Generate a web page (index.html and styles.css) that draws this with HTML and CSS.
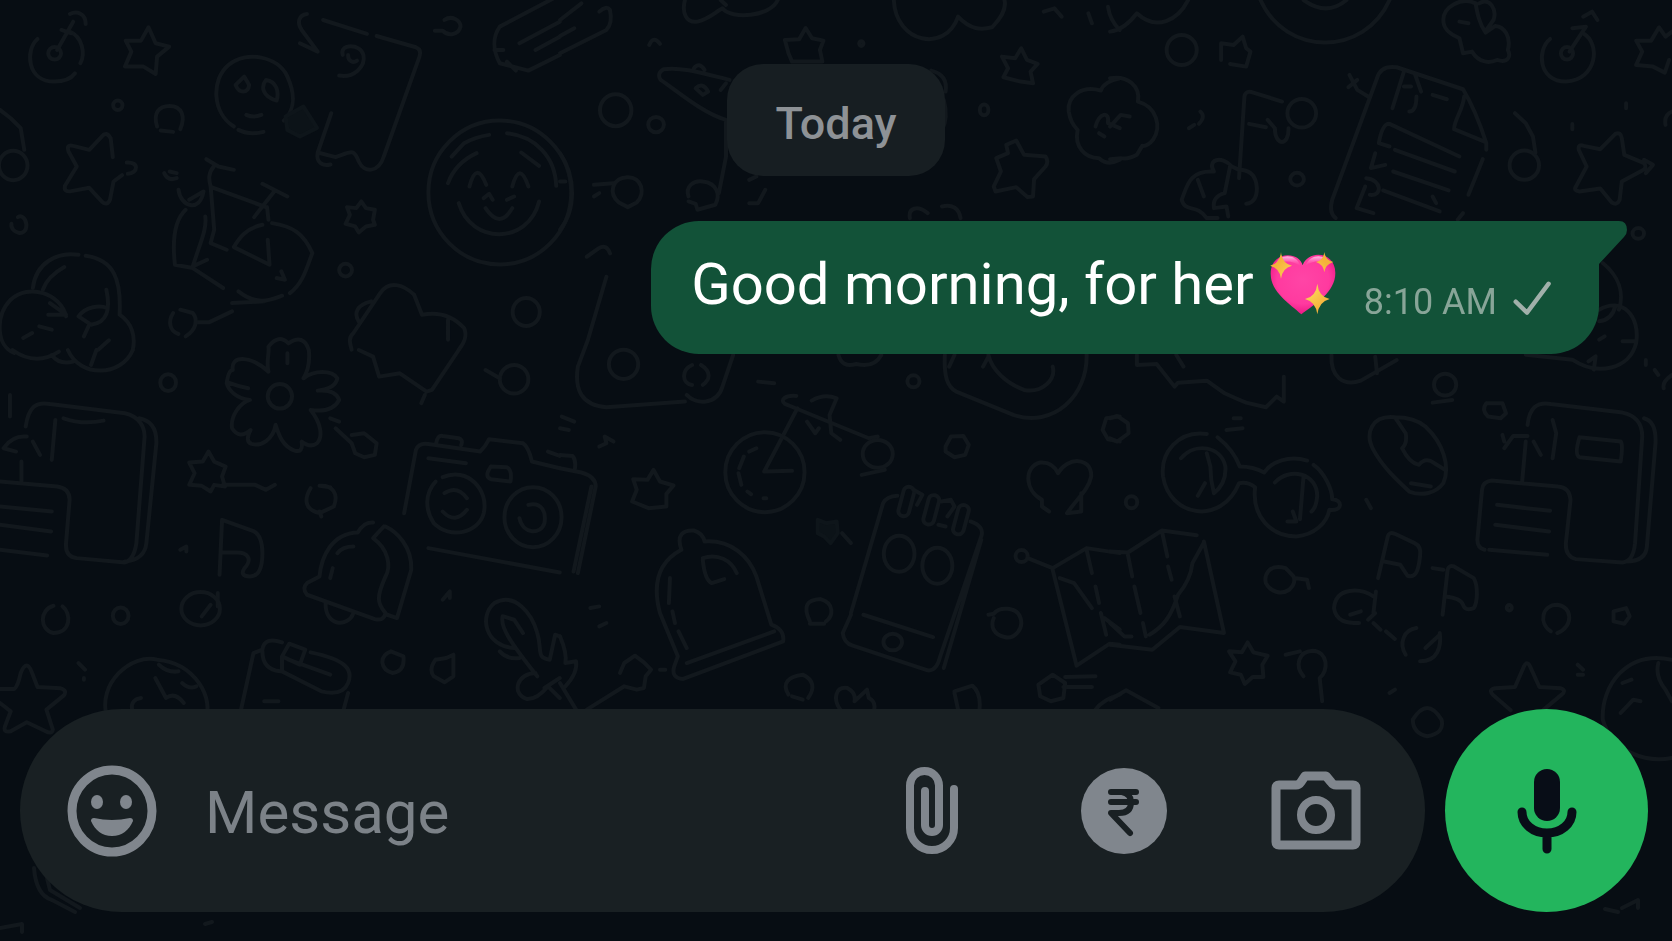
FILE: index.html
```html
<!DOCTYPE html>
<html lang="en">
<head>
    <meta charset="UTF-8">
    <meta name="viewport" content="width=device-width, initial-scale=1.0">
    <title>Chat</title>
    <link rel="stylesheet" href="styles.css">
</head>
<body>
    <!-- Doodle wallpaper -->
    <svg class="wallpaper" viewBox="0 0 1672 941" preserveAspectRatio="xMidYMid slice" aria-hidden="true">
        <!-- top left -->
        <g transform="scale(.357 .333)">
            <path d="M105 117C70 150 75 245 152 245C180 245 200 235 210 220M195 95C230 110 240 160 225 190"/>
            <ellipse cx="153" cy="160" rx="18" ry="19"/>
            <path d="M160 150L205 65M172 90L200 100M196 42C215 32 240 40 240 72"/>
            <path d="M416 82L436 130L474 140L440 170L436 222L402 200L350 200L368 155L352 122L395 122Z"/>
            <ellipse cx="330" cy="316" rx="13" ry="14"/>
            <path d="M440 380C428 340 445 318 475 318C510 318 520 350 505 388M450 392L485 396"/>
            <path d="M655 380C595 340 590 240 640 195C690 150 780 170 805 230C830 290 825 330 795 362M668 390C690 402 715 402 738 396"/>
            <path d="M660 255L684 230L698 255C695 280 670 282 660 255ZM745 240C730 260 735 290 775 302C782 275 775 245 745 240ZM690 345Q710 355 732 345"/>
            <path class="blot" d="M800 350L850 320L888 384L840 410L805 390Z"/>
            <path d="M860 42C835 45 832 70 845 90L890 155L840 130M905 60L1028 102M1055 108L1165 142Q1182 150 1175 170L1075 470C1060 520 1020 520 1005 485C990 445 985 455 940 472L890 458L928 340M890 458C885 485 900 500 926 494"/>
            <path d="M960 165C950 130 1010 130 1018 165C1025 200 990 235 950 227M975 165C975 185 990 190 1000 182"/>
            <path d="M1245 60C1265 45 1290 60 1290 80C1285 105 1255 110 1240 92L1218 92"/>
            <path d="M1568 -15L1400 80C1380 110 1380 150 1400 190L1480 212L1568 165M1455 130L1568 65M1500 150L1568 110M1385 150H1410M1420 185L1445 212"/>
            <path d="M0 330L30 355L58 385L68 450M0 325"/>
            <ellipse cx="37" cy="497" rx="40" ry="44"/>
            <path d="M316 472L310 415Q298 392 285 410L250 450L205 438Q185 432 192 455L215 500L182 558Q178 578 200 574L250 564L285 605Q300 620 308 600L318 545L342 526M355 488C390 485 388 520 358 522"/>
            <path d="M460 520Q470 545 495 535M475 515L495 520M32 672C28 700 75 715 74 675C72 655 60 645 50 652"/>
            <path d="M578 478L612 500L655 510M600 498C582 520 585 540 590 560L600 690L590 730L635 750M592 562L745 622M735 552L805 590M768 575L712 652M748 622L752 660"/>
            <path d="M575 650C580 690 560 730 540 800L580 780M520 630C490 660 482 720 490 795L540 805L625 865M500 570C505 620 560 640 570 575L530 600"/>
            <path d="M762 670C820 680 850 700 875 760C860 800 850 850 812 880M735 675C690 685 670 715 655 742L755 795L750 720M668 875C720 920 760 900 790 888M650 910L740 905M552 968H585L650 935"/>
            <path d="M788 815L798 840L775 835M1012 605L1025 625L1050 630L1045 660L1050 675L1025 680L1005 698L995 680L968 672L980 645L972 622L998 625Z"/>
            <ellipse cx="968" cy="811" rx="18" ry="19"/>
            <ellipse cx="1400" cy="578" rx="200" ry="216"/>
            <path d="M1265 470L1300 430Q1330 412 1370 405M1420 400C1500 410 1555 470 1558 558M1255 550Q1275 490 1335 460M1460 458L1510 498M1315 560Q1335 480 1362 555M1435 560Q1455 480 1480 560M1285 610C1320 735 1480 735 1510 605M1360 625Q1400 690 1435 625M1355 595L1370 582L1380 600M1420 600L1440 590"/>
            <path d="M92 865C100 790 160 755 220 765M240 768C320 780 340 840 335 945C370 970 380 1010 372 1050M120 870C130 840 150 820 180 802M298 870C310 930 300 970 255 975L220 950C240 920 280 915 300 925"/>
            <path d="M185 950C170 880 80 850 30 900C-15 950 -10 1040 40 1060M110 980L145 990M135 945H185L140 910M65 1015L90 1000M250 975L235 1010M275 1050L305 1022"/>
            <path d="M485 940C470 965 475 995 500 1003M505 930L540 940C555 960 550 990 520 1010"/>
            <path d="M985 1050C980 1030 975 1015 990 1000L1065 880C1090 840 1130 855 1160 885L1182 945C1230 935 1270 950 1300 985C1310 1010 1300 1030 1285 1050M1040 905C1000 915 990 940 1005 965M1255 960V1020"/>
            <ellipse cx="1474" cy="937" rx="38" ry="42"/>
        </g>
        <!-- top middle -->
        <g transform="translate(560) scale(.357 .333)">
            <path d="M0 60L60 10M0 108L40 85M0 160L130 90Q148 70 140 30Q130 15 110 35"/>
            <path d="M350 0C340 40 355 70 385 65C420 55 430 40 455 25C480 60 590 50 610 0M465 15L450 0"/>
            <path d="M935 0C940 130 1080 160 1115 50C1150 90 1180 90 1210 82C1240 50 1250 20 1245 0"/>
            <path d="M688 84L706 115L738 122L728 150L735 185H650L640 160L630 120L670 118Z"/>
            <path d="M250 135Q262 105 280 132M1355 35L1385 25L1405 50M1490 70L1480 40"/>
            <ellipse cx="156" cy="331" rx="44" ry="48"/>
            <ellipse cx="269" cy="374" rx="22" ry="23"/>
            <ellipse cx="844" cy="131" rx="6" ry="7"/>
            <path d="M475 240C400 220 340 200 290 208Q270 220 282 240C330 275 400 340 465 360V470L445 580M375 205Q390 185 405 210M380 265Q400 245 415 275L400 285ZM465 250L450 270"/>
            <path d="M1040 212C1070 220 1085 240 1080 275M1075 300C1085 340 1080 370 1070 390"/>
            <path d="M0 460C45 530 45 630 0 690M0 545H15M95 555L150 550M95 590L110 580"/>
            <path d="M165 608C135 580 145 535 188 532C230 530 240 580 215 608L190 622Z"/>
            <path d="M360 590C350 560 375 540 400 545C440 550 450 585 435 615L385 630L380 612L360 605"/>
            <path d="M530 540L550 530M530 610L555 610L575 570M980 655C975 625 1000 615 1030 640M1070 620Q1115 610 1122 655"/>
            <path d="M1292 145L1308 180L1338 192L1318 215L1325 250L1290 245L1242 232L1255 205L1238 170L1275 175Z"/>
            <ellipse cx="1188" cy="330" rx="12" ry="16"/>
            <path d="M1278 422L1300 465L1360 470Q1370 485 1360 500L1328 538L1325 590L1310 592L1278 562L1220 575L1215 560L1235 515L1222 475L1255 460L1250 435Z"/>
            <path d="M1568 235C1540 240 1520 255 1515 272C1460 255 1420 290 1425 335Q1430 370 1450 390C1440 440 1470 475 1510 475C1530 495 1550 490 1568 480M1500 380C1510 340 1540 330 1535 370L1568 385M1510 400L1525 410M1535 20Q1540 60 1568 90"/>
        </g>
        <!-- top right -->
        <g transform="translate(1110) scale(.3584 .333)">
            <path d="M0 95Q40 90 75 40C130 95 190 60 218 0"/>
            <path d="M420 0C490 170 710 170 780 0M540 0Q605 50 660 0"/>
            <ellipse cx="200" cy="150" rx="42" ry="45"/>
            <path d="M310 180V130L345 135L370 110L380 145L392 155L380 200L335 192M368 115"/>
            <path d="M1020 10C980 -10 930 20 930 60C930 100 970 110 975 115L985 160L1010 155C1030 190 1060 190 1080 180C1110 190 1120 170 1110 150C1120 110 1100 80 1075 78L1048 98C1030 70 1025 40 1020 10ZM1030 10C1060 -10 1080 30 1070 60L1050 90M975 65L1000 70"/>
            <path d="M1228 117C1190 150 1195 245 1272 245C1360 240 1370 130 1320 100"/>
            <ellipse cx="1275" cy="160" rx="17" ry="19"/>
            <path d="M1282 155L1328 80L1290 85M1320 50L1345 35L1360 60"/>
            <path d="M1568 95L1550 110L1532 82L1510 122L1468 122L1485 155L1468 195L1515 200L1548 218L1560 180"/>
            <path d="M0 235C50 225 85 260 78 305C130 320 145 380 120 420Q105 440 90 438L75 465Q50 480 30 475L0 478M0 380L30 345L55 350"/>
            <path d="M360 535L375 290Q378 270 400 278L480 305M388 372L435 382M440 360L460 385C460 440 500 440 498 385"/>
            <ellipse cx="535" cy="340" rx="40" ry="43"/>
            <path d="M252 335Q268 350 248 372M220 385L235 375"/>
            <path d="M200 600C215 560 220 510 290 515C270 480 310 465 340 500L360 510Q400 510 408 550C415 590 400 610 380 612M200 600C210 640 240 610 270 655H300M245 540L262 590M335 500L320 580Q285 590 290 625L325 620L330 650"/>
            <ellipse cx="522" cy="538" rx="19" ry="19"/>
            <path d="M630 655Q610 640 620 600L745 235Q755 195 800 202L985 268Q1020 330 1050 430V450M1040 478L1000 585M988 290C985 330 960 360 960 388L1045 425M820 215L788 325M820 260H840M850 220L868 275M855 290C855 325 845 335 835 335M900 285L940 298M668 225L690 270L720 290M665 262L690 240"/>
            <path d="M780 440L750 430Q760 370 780 372L975 470M795 450L962 515M740 460L728 505L768 495M790 515L945 572M762 572L920 635M715 535C760 540 760 590 725 585M712 560L688 625L735 640M900 590L910 610M985 640L970 660"/>
            <ellipse cx="1156" cy="496" rx="41" ry="44"/>
            <path d="M1130 340L1160 370L1180 410L1187 458M1440 310V325M1290 372V388M1568 335Q1545 345 1550 375"/>
            <path d="M1410 402Q1425 395 1428 415L1435 465L1490 490Q1500 505 1485 512L1428 545L1422 600Q1415 618 1400 608L1368 566L1310 575Q1292 572 1300 560L1330 500L1308 450Q1305 432 1322 438L1368 448ZM1490 480L1515 495L1495 520"/>
            <path d="M1375 790C1420 830 1435 880 1420 930M1365 930C1430 890 1480 950 1468 1030C1450 1110 1360 1130 1290 1080L1160 1065M1365 1020L1380 1010M1430 1025H1468M1350 1110L1355 1070L1335 1085M1365 965Q1400 960 1410 920"/>
            <ellipse cx="1474" cy="701" rx="16" ry="16"/>
        </g>
        <!-- middle left -->
        <g transform="translate(0 350) scale(.357 .333)">
            <path d="M35 0Q100 50 165 5M145 15Q165 45 205 35M190 0C225 85 340 80 372 0M270 0L255 45"/>
            <ellipse cx="471" cy="98" rx="22" ry="25"/>
            <path d="M752 65C745 35 755 10 752 -10Q780 -50 808 -20Q850 -50 865 0Q870 50 850 85C880 60 930 60 945 85Q940 115 890 122Q940 118 950 150Q930 190 870 180C900 220 905 260 888 280Q870 295 845 275Q850 310 825 302C790 290 780 250 772 225C765 270 730 290 705 282Q685 275 702 240Q670 270 650 235C645 200 670 160 700 150C660 145 640 120 635 100Q640 60 652 60C645 15 700 15 752 65ZM640 98Q670 110 695 115M805 40V10"/>
            <ellipse cx="784" cy="139" rx="34" ry="37"/>
            <path d="M1005 0L1045 20L1062 80L1120 70L1195 125L1210 120L1285 0M1180 160L1190 135"/>
            <ellipse cx="1440" cy="88" rx="40" ry="43"/>
            <path d="M1360 60L1400 85M28 135V200"/>
            <path d="M72 230C80 170 100 155 140 162L350 190C390 200 405 230 405 260L382 580Q375 630 350 638L215 625Q182 620 185 580L195 450Q195 415 160 410L0 395M390 205Q440 215 438 280L410 580Q405 630 350 635M0 470L145 485M0 525L143 545M0 600L132 617M60 335V395M155 210L145 330M178 205Q230 225 290 212M75 260C30 255 15 290 10 295L45 305M92 275L112 315"/>
            <path d="M584 305L600 335L632 350L622 380L630 410L600 405L590 425L565 408L530 405L545 370L530 338L568 335ZM625 405H715L745 420L770 405"/>
            <path d="M985 255L1020 250L1055 280L1050 315L1020 322L995 310L985 280L940 235M925 205L950 215"/>
            <path d="M870 415C850 450 855 480 895 490L935 470C950 430 930 405 895 408L925 412M895 485L900 500"/>
            <path d="M1132 490L1165 300Q1172 278 1200 282L1345 305Q1360 290 1370 268L1465 280Q1480 290 1490 335L1568 355M1222 280Q1225 255 1240 258L1285 265Q1298 270 1292 285M1200 325L1305 340M1375 350L1420 352Q1435 360 1430 395L1375 388Q1355 380 1375 350M1200 595L1568 668M1535 305L1568 318"/>
            <path d="M1240 382C1310 350 1370 420 1355 490C1340 550 1260 570 1215 520C1190 480 1190 430 1220 395M1245 430Q1280 405 1308 445M1240 485Q1275 525 1308 480"/>
            <ellipse cx="1493" cy="502" rx="80" ry="90"/>
            <path d="M1480 465C1520 455 1530 490 1525 520C1515 555 1465 555 1455 505"/>
            <path d="M615 675L622 510L712 545Q735 560 735 610C735 650 725 680 700 680C680 680 675 670 685 655C710 625 690 608 665 608H620M610 730V770"/>
            <ellipse cx="562" cy="777" rx="54" ry="50"/>
            <path d="M565 800L590 765M505 600L522 590V605"/>
            <path d="M1080 530C1110 545 1155 590 1152 660L1112 805L1085 795M1075 530L1045 565C1090 600 1095 650 1080 680C1055 740 1055 760 1080 790Q1075 815 1050 808L860 735Q845 715 860 700L895 680C900 620 930 550 1002 548Q1020 515 1045 518M912 760C910 830 975 835 990 790M945 610Q960 590 990 590M925 685L932 655"/>
            <path d="M150 768C110 780 110 840 150 850C200 850 200 790 175 770"/>
            <ellipse cx="338" cy="798" rx="22" ry="25"/>
            <path d="M0 1018H40Q50 1010 58 970Q75 925 90 970L105 1012L170 1016Q190 1022 178 1038L130 1080L148 1140Q145 1155 128 1145L75 1118L30 1145Q8 1150 14 1130L30 1085L0 1060"/>
            <path d="M300 1105C270 1000 370 910 440 930C550 940 600 1050 575 1110M435 985L465 1045Q490 1025 515 1060M370 1080Q365 1050 395 1045M445 945Q470 970 500 965M510 1000Q530 1020 550 1010"/>
            <path d="M670 1105L710 910L735 900Q740 860 790 878M735 905Q735 960 785 965M790 920L810 882L855 900L840 945L790 920V965L900 1025Q960 1040 975 1000C990 960 970 930 870 908M808 930L925 975M975 1030L960 1090M740 1055H780"/>
            <path d="M1095 905C1060 920 1065 960 1100 970Q1135 965 1130 920ZM1220 930L1250 925L1270 915V980L1245 998L1215 980Q1200 960 1220 930M220 940L238 960M235 985V990"/>
            <path d="M1440 895C1360 890 1340 800 1385 760C1440 725 1490 790 1505 850C1520 900 1500 925 1540 930L1555 855L1568 860M1408 800C1400 830 1430 880 1505 980M1410 800L1440 810L1465 850M1400 905Q1420 930 1455 925M1500 970C1450 970 1430 1030 1475 1048C1500 1050 1520 1030 1535 1010L1568 1045M1525 1015L1568 985"/>
            <path d="M1240 750L1260 725V745"/>
        </g>
        <!-- middle -->
        <g transform="translate(560 340) scale(.357 .333)">
            <path d="M75 -250L108 -275Q130 -290 140 -260M78 0L50 80C40 150 60 195 130 202L350 185M78 0L130 -190M355 165C380 195 440 195 455 140L485 45"/>
            <ellipse cx="178" cy="73" rx="41" ry="44"/>
            <path d="M370 75C340 90 340 130 370 135M395 75C425 95 420 120 400 135M780 45Q790 85 830 72Q880 85 900 45M555 125L600 130"/>
            <path d="M1078 45C1075 110 1085 140 1110 155L1270 225C1380 265 1480 170 1475 40M1200 45C1210 90 1250 130 1300 150C1350 160 1390 120 1380 80M1105 45L1090 80M1185 80L1200 50"/>
            <ellipse cx="990" cy="124" rx="17" ry="18"/>
            <path d="M0 265L25 270M5 230L40 245M110 320L130 310L125 290L150 305"/>
            <path d="M662 168C630 165 615 180 630 192L660 205L865 295L890 290M665 205L572 395L650 393M705 182Q740 160 775 175L755 225L760 280L785 300M692 245L715 280L725 265"/>
            <ellipse cx="574" cy="397" rx="111" ry="120"/>
            <path d="M550 325L530 335M515 350L502 385M500 400L508 435M525 455L535 463M570 475H578"/>
            <ellipse cx="890" cy="342" rx="42" ry="42"/>
            <path d="M845 405L910 390M1080 320L1095 290L1130 288L1145 315L1135 345L1105 352L1080 335Z"/>
            <path d="M262 390L280 425L318 437L298 462V500L248 505L202 485L215 450L205 418L245 420Z"/>
            <path d="M0 345L35 348Q45 360 42 385M0 385L60 398Q100 410 100 440L50 700M88 440L38 695"/>
            <path d="M1370 515L1350 500V480C1300 450 1300 380 1345 368Q1380 365 1395 400C1420 350 1490 350 1488 410C1480 450 1450 475 1420 520L1460 515V460"/>
            <path d="M1568 230L1530 235L1520 270L1535 298L1568 305"/>
            <path d="M340 630C325 585 345 570 375 572Q400 580 405 605C480 600 530 650 550 710L592 855Q630 870 625 905L345 1018Q310 1015 320 980L330 950L280 820C260 740 270 670 340 630M355 970L600 875M400 655C440 640 480 660 495 700M400 660Q405 720 425 730L460 718M308 715L305 790M315 815L322 850M332 875L355 925"/>
            <path class="blot" d="M722 540L745 550L775 545L778 580L758 610L740 590L722 580Z"/>
            <path d="M790 580L815 610M700 845C680 800 690 780 730 778C770 790 765 830 745 845M700 852H740"/>
            <path d="M815 820L905 490Q915 470 945 468M815 825L792 880Q795 910 820 918L1030 992Q1055 995 1065 950L1180 590Q1190 560 1150 545M1180 600L1075 985M850 825L1045 892"/>
            <rect x="955" y="440" width="30" height="90" rx="15" transform="rotate(14 970 485)"/>
            <rect x="1025" y="465" width="30" height="90" rx="15" transform="rotate(14 1040 510)"/>
            <rect x="1108" y="495" width="30" height="90" rx="15" transform="rotate(14 1125 540)"/>
            <path d="M990 450L1015 465L1000 495M1068 485L1095 480L1105 500L1085 530M1060 555L1080 560"/>
            <ellipse cx="950" cy="642" rx="43" ry="54"/>
            <ellipse cx="1057" cy="678" rx="42" ry="54"/>
            <ellipse cx="932" cy="907" rx="26" ry="25"/>
            <ellipse cx="1293" cy="649" rx="17" ry="18"/>
            <path d="M1310 655L1380 685L1475 625L1568 640M1380 690L1447 978L1540 912L1568 915M1475 630L1490 700M1500 740L1510 790M1515 820L1530 885M1400 715L1440 730L1490 805M1525 835L1568 870M1415 1012L1500 1010M1410 1042H1490"/>
            <path d="M1200 825L1215 822C1230 800 1280 800 1290 835C1300 870 1270 900 1245 892C1215 885 1205 860 1215 835"/>
            <path d="M168 1000L180 970L210 948L235 968L255 990L240 1010L235 1045L215 1050L180 1040L75 1110M280 990H295"/>
            <path d="M640 1065C620 1030 640 1010 680 1005C710 1020 715 1045 695 1075M650 1070L680 1080"/>
            <path d="M785 1110C765 1080 770 1040 805 1045Q830 1060 825 1085L860 1050L865 1075Q885 1085 880 1110M1105 1055L1155 1038Q1180 1060 1175 1110M1105 1060L1115 1110M1340 1035L1380 1005L1415 1030L1410 1075L1375 1085L1345 1070ZM1500 1110Q1520 1080 1568 1065"/>
            <path d="M0 890Q20 940 15 970L45 965Q50 1000 15 1040M0 1030L45 1110"/>
            <path d="M85 805L110 800M110 860L130 850"/>
        </g>
        <!-- middle right -->
        <g transform="translate(1110 350) scale(.3584 .333)">
            <path d="M75 15V45L130 42L180 110L190 98L270 92L320 130Q360 150 380 158L435 172L465 140L485 155V80M185 15L205 50"/>
            <path d="M618 15C615 80 650 110 700 92L800 30M740 20L745 70"/>
            <ellipse cx="935" cy="104" rx="31" ry="33"/>
            <path d="M900 158L955 150M1050 160L1095 160L1105 190L1090 205L1055 200Q1035 180 1050 160"/>
            <path d="M0 205L20 198L50 220L52 250L20 275L0 265M325 240L370 235M345 205H365"/>
            <ellipse cx="60" cy="457" rx="16" ry="18"/>
            <path d="M270 252C190 240 140 310 148 380C165 500 310 530 360 400Q385 395 405 412C395 500 450 560 520 560C570 555 605 520 612 480C650 485 650 450 620 448C620 420 600 370 568 345M550 332C500 315 450 335 430 368Q400 350 362 350Q345 300 300 262M198 325C240 275 310 290 322 350Q325 400 290 430Q280 390 280 350L270 310M245 438L265 400M460 398C500 350 580 370 578 440Q575 475 562 485M540 380L530 508M495 515H520L510 485"/>
            <path d="M795 202C730 195 710 250 735 300C760 350 800 390 835 425C870 440 910 430 930 400C950 350 930 280 880 230Q850 202 795 202L825 250Q830 280 815 295Q835 340 862 345Q880 320 905 340L935 360M840 400L895 410M715 450L728 475"/>
            <path d="M1165 225C1170 175 1190 155 1230 162L1430 188Q1485 200 1485 260L1465 580Q1460 635 1430 638L1300 628Q1270 620 1272 580L1285 450Q1282 412 1250 410L1065 392Q1040 395 1038 420L1025 570Q1025 595 1045 600M1490 205Q1525 215 1522 280L1498 590Q1495 635 1440 635M1310 262L1425 275Q1432 285 1425 335L1310 322Q1295 315 1310 262M1080 465L1228 483M1075 525L1225 545M1058 600L1220 615M1160 275L1150 395M1235 210L1245 250L1235 325M1165 258H1125L1100 295M1095 255L1100 275M1182 275L1202 315"/>
            <path d="M0 605L50 608L145 542L242 556M50 615L62 680M68 710L85 790M92 820L100 860M145 545L160 620M162 650L172 690M180 740L195 800M262 575L318 850L195 832L118 900L0 885M262 578L230 640Q225 690 190 735C170 800 150 830 110 855M0 820L40 860H60"/>
            <path d="M490 655C440 640 430 680 435 700C450 730 480 735 500 720Q520 700 512 680ZM515 685L550 690L555 715"/>
            <path d="M748 685L775 560Q778 545 795 552L850 580Q870 590 865 620C860 670 850 685 830 678L810 645L765 635M742 725L735 790M735 740C700 715 630 710 625 775C630 815 660 820 695 820M670 795L700 785M735 820L755 840M770 845L795 868M720 810L740 790"/>
            <path d="M928 795L942 660Q945 645 960 650L1015 685C1028 710 1025 760 1015 775Q990 785 985 765Q980 745 935 740M920 850C925 890 915 935 865 935M825 915C805 880 820 840 855 835M880 895L920 855M900 655L930 660"/>
            <path d="M1230 845C1195 820 1205 765 1248 765C1290 770 1295 830 1248 850M1405 785L1440 775L1450 800L1435 822L1405 815Z"/>
            <ellipse cx="1114" cy="774" rx="7" ry="8"/>
            <path d="M384 878L400 908L440 918L425 945L428 982L398 982L376 1003L365 975L335 968L350 935L332 905L368 908Z"/>
            <path d="M540 980C515 950 525 905 565 903C610 905 610 965 585 985L592 1055M490 915L530 905"/>
            <path d="M1118 1082L1068 1035Q1055 1020 1075 1016L1130 1012L1155 950Q1163 932 1172 950L1198 1012L1258 1016Q1275 1022 1260 1035L1210 1080"/>
            <path d="M1568 930C1440 900 1370 1010 1375 1110C1400 1210 1500 1240 1568 1225M1530 940Q1520 980 1550 1020L1568 1055M1425 1090L1460 1050L1480 1055M1430 1000L1455 990"/>
            <path d="M0 1050L45 1022L135 1075M845 1110Q885 1040 925 1110Q935 1150 885 1160Q845 1150 845 1110M1305 945L1320 960M1305 975H1320M780 1030L795 1020"/>
            <path d="M1568 75Q1540 95 1545 115M1495 30V45M1520 60L1530 75"/>
        </g>
        <!-- under the composer -->
        <path d="M34 868Q36 895 52 900L75 912M45 870L50 890L80 908M0 928L22 924V932M205 924L212 922M1605 909L1618 912M1622 908L1638 900V908"/>
    </svg>

    <main class="chat">
        <p class="day">Today</p>

        <article class="bubble">
            <p class="text">Good morning, for her</p>
            <svg class="heart" viewBox="90 125 198 190" role="img" aria-label="Sparkling heart">
                <defs>
                    <radialGradient id="pink" cx="50%" cy="42%" r="62%">
                        <stop offset="0" stop-color="#ff45a6"/>
                        <stop offset=".65" stop-color="#ff3a9f"/>
                        <stop offset="1" stop-color="#e8107f"/>
                    </radialGradient>
                    <linearGradient id="shine" x1="0" y1="0" x2="0" y2="1">
                        <stop offset="0" stop-color="#ffc0e6"/>
                        <stop offset="1" stop-color="#ff5cb1" stop-opacity="0"/>
                    </linearGradient>
                    <radialGradient id="gold">
                        <stop offset="0" stop-color="#ffe96b"/>
                        <stop offset="1" stop-color="#f5b23a"/>
                    </radialGradient>
                </defs>
                <path fill="url(#pink)" d="M188 165C176 120 92 122 92 190C92 246 150 280 184 312C226 280 286 246 286 188C286 122 204 118 188 165Z"/>
                <path fill="url(#shine)" d="M106 162C116 132 168 126 182 168C160 150 130 150 106 162ZM196 166C212 128 258 130 272 162C250 148 216 150 196 166Z"/>
                <path fill="url(#gold)" d="M123 125Q126 160 156 166Q127 173 123 205Q119 173 90 166Q120 160 123 125ZM253 125Q256 150 280 155Q257 161 253 186Q249 161 228 155Q250 150 253 125ZM232 220Q236 259 269 266Q237 274 232 312Q227 274 195 266Q228 259 232 220Z"/>
            </svg>
            <time class="time">8:10 AM</time>
            <svg class="check" viewBox="822 223 114 104" role="img" aria-label="Sent">
                <path d="M830 285L864 318L929 231"/>
            </svg>
            <svg class="tail" viewBox="0 0 28 43" aria-hidden="true">
                <path d="M0 0H20Q28 0 28 9Q28 13 25 16L0 43Z"/>
            </svg>
        </article>
    </main>

    <form class="composer">
        <div class="field">
            <button class="icon" type="button" aria-label="Emoji">
                <svg width="90" height="92" viewBox="0 0 90 92">
                    <ellipse class="line" cx="45" cy="46" rx="40" ry="41" stroke-width="9"/>
                    <ellipse cx="30" cy="37" rx="6" ry="7"/>
                    <ellipse cx="59" cy="37" rx="6" ry="7"/>
                    <path d="M27 53Q45 57 63 53Q66 53 66 56C62 65 55 71 45 71S28 65 24 56Q24 53 27 53Z"/>
                </svg>
            </button>
            <input class="message" type="text" placeholder="Message" aria-label="Message">
            <div class="actions">
                <button class="icon" type="button" aria-label="Attach">
                    <svg width="52" height="88" viewBox="0 0 52 88">
                        <path class="line" stroke-width="8" d="M48 22V61A22 22 0 0 1 4 61V18.500A14.500 14.500 0 0 1 33 18.500V58A7 7 0 0 1 19 58V24"/>
                    </svg>
                </button>
                <button class="icon" type="button" aria-label="Payment">
                    <svg width="88" height="88" viewBox="0 0 88 88">
                        <circle cx="44" cy="44" r="43"/>
                        <path class="cut" d="M31 25H56M31 35H56M42 25Q51 27 51 35Q51 46 39 46H31L50 66"/>
                    </svg>
                </button>
                <button class="icon" type="button" aria-label="Camera">
                    <svg width="90" height="80" viewBox="0 0 90 80">
                        <path class="line" stroke-width="9" d="M8 14H25Q28 14 30 11L34 5H55L60 11Q62 14 65 14H82Q85 14 85 17V71Q85 74 82 74H8Q5 74 5 71V17Q5 14 8 14Z"/>
                        <circle class="line" cx="45" cy="44" r="15" stroke-width="8"/>
                    </svg>
                </button>
            </div>
        </div>
        <button class="mic" type="button" aria-label="Record voice message">
            <svg width="60" height="86" viewBox="0 0 60 86">
                <rect x="17" y="1" width="26" height="52" rx="13"/>
                <path d="M5 44C5 56 16 65 30 65S55 56 55 44M30 66V81"/>
            </svg>
        </button>
    </form>
</body>
</html>
```

FILE: styles.css
```css
* {
    box-sizing: border-box;
}
body {
    display: flex;
    flex-direction: column;
    min-height: 100vh;
    margin: 0;
    background-color: #070d13;
    font-family: Roboto, "Liberation Sans", sans-serif;
}
p {
    margin: 0;
}
button {
    padding: 0;
    border: none;
    background: none;
    cursor: pointer;
}
svg {
    display: block;
}

/* Wallpaper */
.wallpaper {
    position: fixed;
    inset: 0;
    z-index: -1;
    width: 100%;
    height: 100%;
    fill: none;
    stroke: #12181d;
    stroke-width: 4;
    stroke-linecap: round;
    stroke-linejoin: round;
}
.wallpaper * {
    vector-effect: non-scaling-stroke;
}
.wallpaper .blot {
    fill: #0c1318;
    stroke: #0e151a;
}

/* Messages */
.chat {
    display: flex;
    flex: 1;
    flex-direction: column;
    align-items: flex-end;
    padding: 64px 73px 40px;
}
.day {
    align-self: center;
    margin-bottom: 45px;
    padding: 36px 48px 28px;
    border-radius: 36px;
    background-color: #171e22;
    color: #8e9296;
    font-size: 45px;
    font-weight: 500;
    line-height: 48px;
}
.bubble {
    position: relative;
    display: flex;
    align-items: center;
    padding: 31px 48px 38px 40px;
    border-radius: 48px 0 48px 48px;
    background-color: #125238;
}
.text {
    color: #fff;
    font-size: 58px;
    line-height: 64px;
}
.heart {
    width: 66px;
    margin-left: 16px;
}
.time {
    align-self: flex-end;
    margin-left: 28px;
    color: #88a598;
    font-size: 36px;
    line-height: 28px;
}
.check {
    align-self: flex-end;
    width: 38px;
    margin-left: 16px;
    fill: none;
    stroke: #a1b0aa;
    stroke-width: 13;
    stroke-linecap: round;
    stroke-linejoin: round;
}
.tail {
    position: absolute;
    top: 0;
    left: 100%;
    width: 28px;
    fill: #125238;
}

/* Composer */
.composer {
    display: flex;
    gap: 20px;
    padding: 0 24px 29px 20px;
}
.field {
    display: flex;
    flex: 1;
    align-items: center;
    min-width: 0;
    padding: 0 64px 0 47px;
    border-radius: 102px;
    background-color: #192023;
}
.icon {
    display: flex;
    justify-content: center;
    width: 90px;
    fill: #80868d;
}
.actions {
    display: flex;
    align-items: center;
    gap: 102px;
}
.icon .line {
    fill: none;
    stroke: #80868d;
    stroke-linecap: round;
    stroke-linejoin: round;
}
.icon .cut {
    fill: none;
    stroke: #192023;
    stroke-width: 6;
    stroke-linecap: round;
    stroke-linejoin: round;
}
.message {
    flex: 1;
    min-width: 0;
    margin-left: 48px;
    padding: 4px 0 0;
    border: none;
    outline: none;
    background: none;
    color: #fff;
    font: inherit;
    font-size: 60px;
    line-height: 68px;
}
.message::placeholder {
    color: #7c8288;
    opacity: 1;
}
.mic {
    display: flex;
    align-items: center;
    justify-content: center;
    width: 203px;
    height: 203px;
    border-radius: 50%;
    background-color: #23b55d;
}
.mic svg {
    fill: #080d17;
}
.mic path {
    fill: none;
    stroke: #080d17;
    stroke-width: 9;
    stroke-linecap: round;
}
```
